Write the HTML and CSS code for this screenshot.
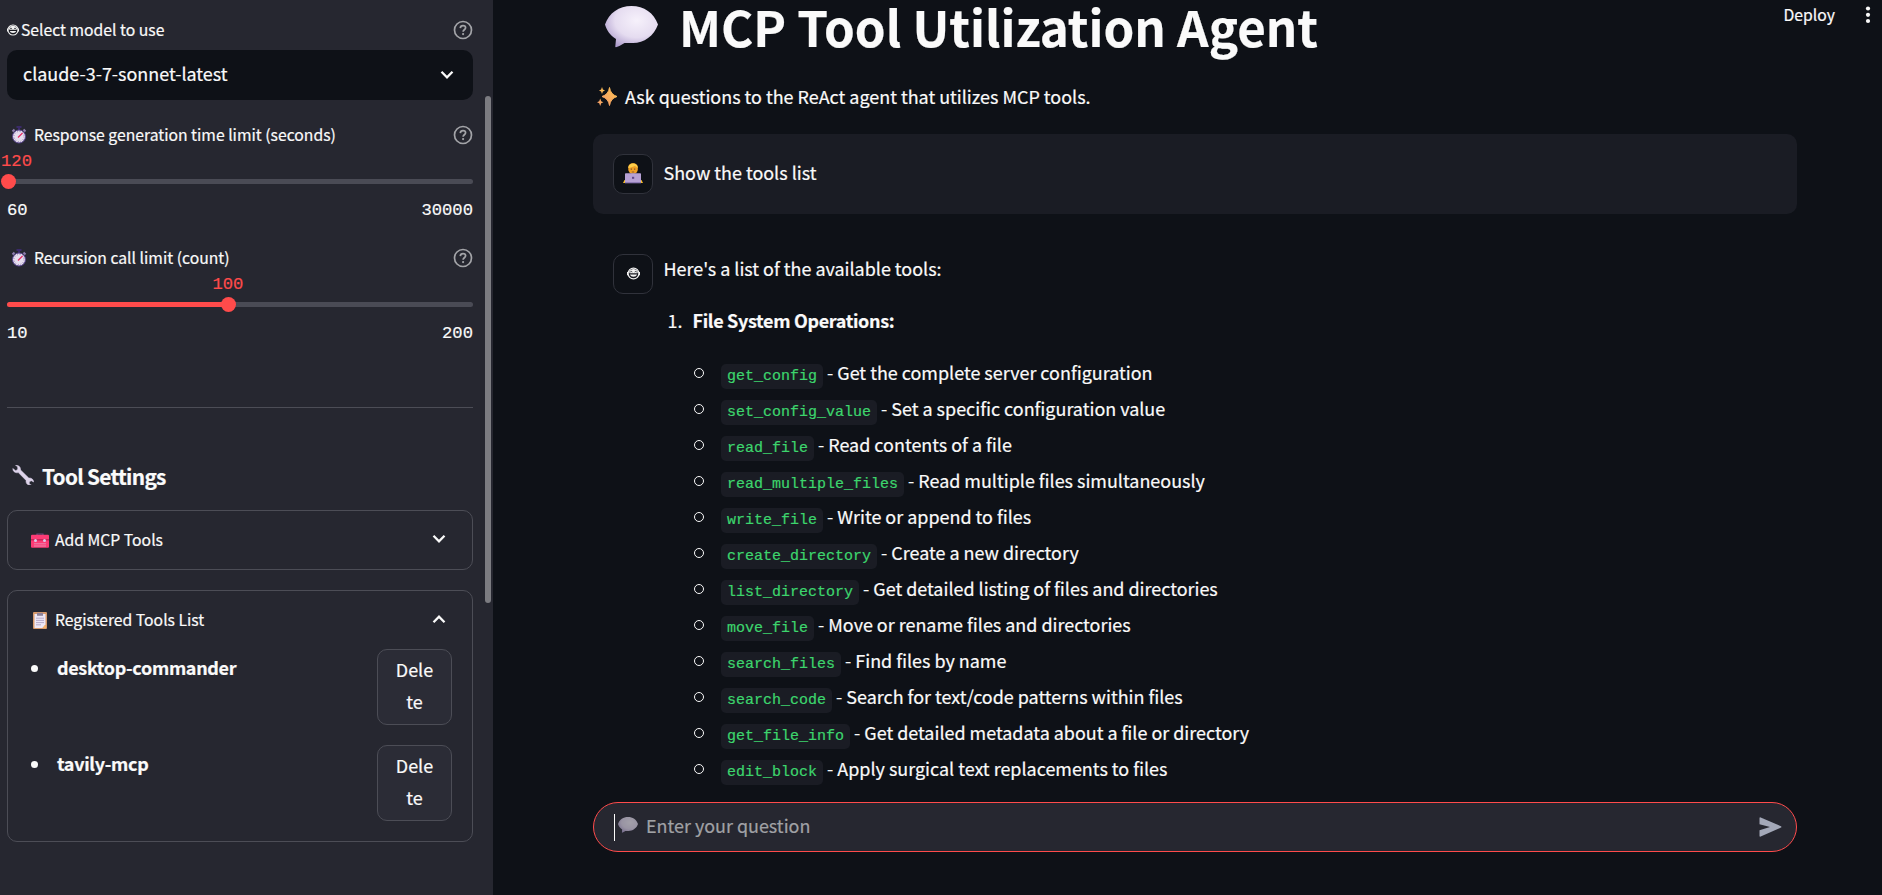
FILE: index.html
```html
<!DOCTYPE html>
<html lang="en">
<head>
<meta charset="utf-8">
<title>MCP Tool Utilization Agent</title>
<link rel="stylesheet" href="styles.css">
</head>
<body>
<svg class="defs" width="0" height="0">
  <defs>
    <radialGradient id="bubbleFill" cx=".6" cy=".35" r=".75">
      <stop offset="0" stop-color="#f6f1fb"/><stop offset=".55" stop-color="#e5dcf0"/><stop offset="1" stop-color="#a795c8"/>
    </radialGradient>
    <linearGradient id="starFill" x1="0" y1="1" x2="1" y2="0">
      <stop offset="0" stop-color="#f59a6c"/><stop offset="1" stop-color="#fcc34f"/>
    </linearGradient>
    <symbol id="bubble" viewBox="0 0 53 42">
      <path fill="url(#bubbleFill)" d="M26.500 0C39 0 49 7 53 18.500 49 30 39 37 28 37h-8.500Q15 40 11 41.300q-1 0-.7-1L11 33C5 29.500 1.500 24 0 18.500 4 7 14 0 26.500 0z"/>
    </symbol>
    <symbol id="help" viewBox="0 0 20 20">
      <g fill="none" stroke="#a3a4a8" stroke-width="1.700"><circle cx="10" cy="10" r="8.500"/><path d="M7.300 8.100c.1-1.700 1.200-2.500 2.700-2.500 1.500 0 2.600.9 2.600 2.200 0 1.900-2.500 2-2.500 4"/></g>
      <circle cx="10.100" cy="14.100" r="1.100" fill="#a3a4a8"/>
    </symbol>
    <symbol id="watch" viewBox="0 0 16 18">
      <path stroke="#3a2a69" stroke-width="2" d="M5.500 1h5M8 1v3"/>
      <path stroke="#8f7eaf" stroke-width="2" d="M1.500 5.500l2-2M14.500 5.500l-2-2"/>
      <circle cx="8" cy="10.500" r="6.500" fill="#e6deef" stroke="#54418c"/>
      <circle cx="8" cy="10.500" r="5" fill="none" stroke="#9485b3" stroke-dasharray="1 1.620"/>
      <path stroke="#e62e65" stroke-width="1.300" d="M7 11.500L11.500 7"/>
    </symbol>
    <symbol id="face" viewBox="0 0 12 12">
      <circle cx="6" cy="6" r="5" fill="#17181f" stroke="#f2f2f2" stroke-width="1.100"/>
      <path fill="#f2f2f2" d="M2 4.200C3.500 1 8.500 1 10 4.200L9.700 5.800H2.300z"/>
      <path fill="none" stroke="#17181f" stroke-width=".8" d="M3 4.600q.9-.9 1.900 0M7.100 4.600q.9-.9 1.900 0"/>
      <path fill="#f2f2f2" d="M2.600 7h6.800Q8.500 9 6 9T2.600 7z"/>
      <path fill="none" stroke="#f2f2f2" stroke-width="1.200" d="M.6 4.500v3M11.400 4.500v3"/>
    </symbol>
    <symbol id="down" viewBox="0 0 14 10"><path fill="none" stroke="#fafafa" stroke-width="2.300" d="M1.500 1.800L7 7.300l5.500-5.500"/></symbol>
  </defs>
</svg>
<aside class="sidebar">
  <div class="label"><svg class="i-face"><use href="#face"/></svg><span class="grow">Select model to use</span><svg class="i-help"><use href="#help"/></svg></div>
  <div class="select"><span>claude-3-7-sonnet-latest</span><svg class="i-chev"><use href="#down"/></svg></div>
  <div class="label"><svg class="i-watch"><use href="#watch"/></svg><span class="grow">Response generation time limit (seconds)</span><svg class="i-help"><use href="#help"/></svg></div>
  <div class="slider" style="--pos:0.2%">
    <div class="value at-start"><span>120</span></div>
    <div class="track"><i class="fill"></i><i class="thumb"></i></div>
    <div class="range"><span>60</span><span>30000</span></div>
  </div>
  <div class="label second"><svg class="i-watch"><use href="#watch"/></svg><span class="grow">Recursion call limit (count)</span><svg class="i-help"><use href="#help"/></svg></div>
  <div class="slider" style="--pos:47.4%">
    <div class="value"><span>100</span></div>
    <div class="track"><i class="fill"></i><i class="thumb"></i></div>
    <div class="range"><span>10</span><span>200</span></div>
  </div>
  <div class="rule"></div>
  <h3 class="heading">
    <svg class="i-wrench" viewBox="0 0 22 20"><path fill="#ddd3ea" stroke="#ddd3ea" stroke-width=".5" d="M.8 3.500l3 2.200 2-1.400-.2-2.600L3.500.3C6 0 8.800 1.500 8.600 5l8.200 8c2.700-.2 4.700 1.400 4.900 4l-2.500-1.300-2 1.300.3 2.500 1.700.4c-3 .9-5.700-1.200-5.100-4.500L6.300 7.600C3.500 8.300.7 6.500.8 3.500z"/></svg>
    <span>Tool Settings</span>
  </h3>
  <section class="expander">
    <div class="summary">
      <svg class="i-box" viewBox="0 0 18 15"><path fill="none" stroke="#6b4a80" stroke-width="1.200" d="M6 3V1h6v2"/><rect y="1.800" width="18" height="13" rx="1" fill="#fb3b75"/><path fill="#c92457" d="M0 6h18v1.500H0z"/><circle cx="4.500" cy="7.500" r="1.500" fill="#d9c9e8"/><circle cx="13.500" cy="7.500" r="1.500" fill="#d9c9e8"/><path stroke="#e793b8" stroke-width=".9" d="M3 10.800h12M3 13h12"/></svg>
      <span class="grow">Add MCP Tools</span><svg class="i-chev"><use href="#down"/></svg>
    </div>
  </section>
  <section class="expander">
    <div class="summary">
      <svg class="i-clip" viewBox="0 0 14 17"><rect width="14" height="17" rx="1" fill="#d89a6a"/><path fill="#eee8f6" d="M1.500 2h11v10.500L9.500 16h-8z"/><path fill="#f7b56a" d="M12.500 12.500L9.500 16l3.500.3z"/><path fill="#8e8298" d="M4 .8h6v3H4z"/><path stroke="#a99bbd" stroke-width=".8" d="M3 6.200h8M3 8.400h8M3 10.600h8M3 12.800h5"/></svg>
      <span class="grow">Registered Tools List</span><svg class="i-chev up"><use href="#down"/></svg>
    </div>
    <div class="tool"><i class="dot"></i><b class="grow">desktop-commander</b><button class="delete">Dele<br>te</button></div>
    <div class="tool"><i class="dot"></i><b class="grow">tavily-mcp</b><button class="delete">Dele<br>te</button></div>
  </section>
  <i class="scrollbar"></i>
</aside>
<main class="main">
  <div class="toolbar"><span>Deploy</span><svg class="i-dots" viewBox="0 0 6 18"><g fill="#fafafa"><circle cx="3" cy="2.500" r="2.100"/><circle cx="3" cy="8.800" r="2.100"/><circle cx="3" cy="15" r="2.100"/></g></svg></div>
  <h1 class="title"><svg class="i-bubble"><use href="#bubble"/></svg><span>MCP Tool Utilization Agent</span></h1>
  <p class="intro"><svg class="i-stars" viewBox="0 0 20 19"><g fill="url(#starFill)"><path d="M12.500.5Q13.500 7.500 20 9.500 13.500 11.500 12.500 18.500 11.500 11.500 5 9.500 11.500 7.500 12.500.5z" stroke="url(#starFill)"/><path d="M5 0l.9 2.500L8 3.500l-2.100 1L5 7l-.9-2.500L2 3.500l2.100-1zM3.200 11.500l1 2.700 2.200 1-2.200 1-1 2.800-1-2.800-2.200-1 2.200-1z"/></g></svg><span>Ask questions to the ReAct agent that utilizes MCP tools.</span></p>
  <div class="message user">
    <div class="avatar"><svg class="i-person" viewBox="0 0 20 21"><path fill="#f8bd2d" d="M0 20l1.500-3h17L20 20z"/><rect x="5.300" y=".3" width="9.500" height="10.500" rx="4.200" fill="#ef9f24"/><path fill="#ffcf4a" d="M5.300 5C5.300-1 14.800-1 14.800 5L12 3 7.500 4.500z"/><path fill="#8a5a2c" d="M7.700 5.600h1.300v1.200H7.700zM11 5.600h1.300v1.200H11zM8.800 8.600h2.400v.8H8.800z"/><rect x="2" y="10.300" width="16" height="9.500" rx=".8" fill="#b6a0d4"/><rect x="2" y="19" width="16" height="1.300" fill="#8f7ab5"/><rect x="9" y="13.800" width="2.200" height="2" fill="#5f4687"/></svg></div>
    <p>Show the tools list</p>
  </div>
  <div class="message">
    <div class="avatar"><svg class="i-bot"><use href="#face"/></svg></div>
    <div class="answer">
      <p>Here's a list of the available tools:</p>
      <div class="group"><span>1.</span><b>File System Operations:</b></div>
      <ul class="list">
        <li><code>get_config</code> - Get the complete server configuration</li>
        <li><code>set_config_value</code> - Set a specific configuration value</li>
        <li><code>read_file</code> - Read contents of a file</li>
        <li><code>read_multiple_files</code> - Read multiple files simultaneously</li>
        <li><code>write_file</code> - Write or append to files</li>
        <li><code>create_directory</code> - Create a new directory</li>
        <li><code>list_directory</code> - Get detailed listing of files and directories</li>
        <li><code>move_file</code> - Move or rename files and directories</li>
        <li><code>search_files</code> - Find files by name</li>
        <li><code>search_code</code> - Search for text/code patterns within files</li>
        <li><code>get_file_info</code> - Get detailed metadata about a file or directory</li>
        <li><code>edit_block</code> - Apply surgical text replacements to files</li>
      </ul>
    </div>
  </div>
  <div class="composer"><i class="caret"></i><svg class="i-ask"><use href="#bubble"/></svg><span class="grow">Enter your question</span><svg class="i-send" viewBox="0 0 23 20"><path fill="#a3a8b8" d="M.5 1.200Q.5 0 1.700.4L22 9.200q1 .8 0 1.400L1.700 19.500Q.5 20 .5 18.700V13.200L11 9.900.5 7.200z"/></svg></div>
</main>
</body>
</html>
```

FILE: styles.css
```css
* { box-sizing: border-box; margin: 0; padding: 0; }
body {
  display: flex; width: 1882px; height: 895px; overflow: hidden;
  background: #0e1117; color: #fafafa;
  font: 17.960px/32px "Noto Sans CJK SC", "Noto Sans CJK JP", sans-serif;
  -webkit-text-stroke: .2px;
}
.defs { position: absolute; }
svg { display: block; flex: none; }
b { letter-spacing: -.3px; }
.grow { flex: 1; white-space: nowrap; }

.sidebar { position: relative; flex: none; width: 493px; height: 895px; padding: 15px 20px 0 7px; background: #262730; }
.label { display: flex; align-items: center; height: 30px; font-size: 15.720px; line-height: 30px; }
.i-face { width: 12px; height: 12px; margin: 0 2px 0 0; }
.i-watch { width: 16px; height: 18px; margin: 0 7px 0 4px; }
.i-help { width: 20px; height: 20px; }
.select { display: flex; align-items: center; justify-content: space-between; height: 50px; margin: 5px 0 20px; padding: 0 19px 0 16px; border-radius: 10px; background: #0e1117; }
.select span { margin-top: -4px; }
.i-chev { width: 14px; height: 10px; }
.up { transform: rotate(180deg); margin-top: -3px; }

.slider { height: 78px; font: 17.200px/24px "Liberation Mono", monospace; }
.value { height: 23px; margin: 0 1px; color: #ff4b4b; }
.value span { display: inline-block; margin-left: var(--pos); transform: translateX(-50%); }
.value.at-start { margin-left: -6px; }
.at-start span { margin-left: 0; transform: none; }
.track { position: relative; height: 5px; margin-top: 6px; border-radius: 3px; background: #4a4b55; }
.fill { display: block; width: var(--pos); height: 5px; border-radius: 3px; background: #ff4b4b; }
.thumb { position: absolute; left: var(--pos); top: -5px; width: 15px; height: 15px; margin-left: -7px; border-radius: 50%; background: #ff4b4b; }
.range { display: flex; justify-content: space-between; margin-top: 15px; }
.second { margin-top: 15px; }
.rule { height: 1px; margin: 56px 0 49px; background: #4c4d56; }

.heading { display: flex; align-items: center; height: 38px; font-size: 20.800px; font-weight: 600; line-height: 38px; letter-spacing: -.7px; }
.i-wrench { width: 22px; height: 20px; margin: -2px 8px 0 5px; }
.expander { margin-top: 15px; border: 1px solid #4c4d56; border-radius: 10px; }
.expander + .expander { height: 252px; margin-top: 20px; }
.summary { display: flex; align-items: center; height: 58px; padding: 0 26px 0 23px; font-size: 15.720px; }
.summary .i-chev:not(.up) { margin-top: -2px; }
.i-box { width: 18px; height: 15px; margin-right: 6px; }
.i-clip { width: 14px; height: 17px; margin: 0 8px 0 2px; }
.tool { display: flex; align-items: flex-start; height: 76px; margin-bottom: 20px; padding: 0 20px 0 23px; }
.dot { width: 7px; height: 7px; margin: 16px 19px 0 0; border-radius: 50%; background: #fafafa; }
.tool b { line-height: 36px; }
.delete { width: 75px; height: 76px; padding-bottom: 5px; border: 1px solid #4c4d56; border-radius: 10px; background: #2b2c36; color: inherit; font: inherit; }
.scrollbar { position: absolute; left: 485px; top: 96px; width: 6px; height: 507px; border-radius: 3px; background: #7c7c81; }

.main { position: relative; display: flex; flex-direction: column; width: 1389px; height: 895px; padding: 0 85px 0 100px; }
.toolbar { position: absolute; top: 0; right: 11px; display: flex; align-items: center; gap: 30px; height: 30px; font-size: 15.750px; }
.i-dots { width: 6px; height: 18px; }
.title { display: flex; height: 52px; padding-left: 12px; font-size: 49.250px; font-weight: 700; line-height: 52px; white-space: nowrap; }
.i-bubble { width: 53px; height: 42px; margin: 6px 21px 0 0; }
.intro { display: flex; align-items: center; height: 32px; margin: 30px 0 20px; padding-left: 4px; }
.intro span { margin-top: -4px; }
.i-stars { width: 20px; height: 19px; margin: -3px 8px 0 0; }
.message { display: flex; gap: 10.500px; padding: 20px; border-radius: 10px; }
.user { height: 80px; margin-bottom: 20px; background: #1a1c24; }
.user p { line-height: 37px; }
.avatar { display: grid; place-items: center; flex: none; width: 40px; height: 40px; border: 1px solid #30323b; border-radius: 10px; background: #0e1117; }
.i-person { width: 20px; height: 21px; margin-top: -2px; }
.i-bot { width: 13px; height: 13px; margin-top: -1px; }
.answer { margin-top: -2px; }
.group { display: flex; gap: 10px; margin: 20px 0; padding-left: 4px; }
.list { padding-left: 57px; list-style: none; }
.list li { position: relative; height: 32px; margin-bottom: 4px; white-space: nowrap; }
.list li::before { content: ""; position: absolute; left: -27px; top: 12px; width: 8px; height: 8px; border: 1.200px solid #fafafa; border-radius: 50%; }
code { display: inline-block; height: 25px; padding: 0 6px 0 6.500px; border-radius: 5px; background: #1a1c24; color: #3dd56d; font: 15px/25px "Liberation Mono", monospace; }
.composer { position: absolute; left: 100px; top: 802px; display: flex; align-items: center; width: 1204px; height: 50px; padding: 0 14px 0 20px; border: 1px solid #ff4b4b; border-radius: 25px; background: #262730; color: #a0a1a5; }
.composer span { margin-top: -5px; }
.caret { width: 1px; height: 27px; margin-right: 3px; background: #fafafa; }
.i-ask { width: 20px; height: 16px; margin: -4px 8px 0 0; opacity: .6; }
.i-send { width: 23px; height: 20px; }
```
